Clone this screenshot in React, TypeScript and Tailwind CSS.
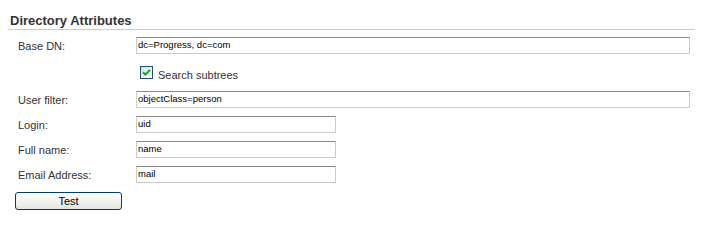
import { useState } from 'react'

const fieldFont = { fontFamily: '"Liberation Sans", Arial, sans-serif' }

function TextField({ value, wide }: { value: string; wide?: boolean }) {
  return (
    <input
      type="text"
      defaultValue={value}
      className={`${wide ? 'w-[554px]' : 'w-[200px]'} h-[17px] border border-[#cccccc] border-t-[#8a8a8a] bg-white pl-[1px] pb-[2px] text-[9.5px] leading-none text-black outline-none`}
      style={fieldFont}
    />
  )
}

function Row({ label, children }: { label: string; children: React.ReactNode }) {
  return (
    <div className="flex h-[17px] items-start">
      <div className="w-[118px] pt-[2px] text-[11px] leading-[15px] text-[#333333]">{label}</div>
      {children}
    </div>
  )
}

export default function App() {
  const [subtrees, setSubtrees] = useState(true)

  return (
    <div className="h-[218px] w-[703px] bg-white" style={fieldFont}>
      <div className="mx-[8px] border-b border-[#cccccc] pb-[1px] pl-[2px] pt-[13px]">
        <h2 className="text-[13px] font-bold leading-[15px] text-[#333333]">Directory Attributes</h2>
      </div>

      <div className="flex flex-col pl-[18px] pt-[7px]">
        <Row label="Base DN:">
          <TextField value="dc=Progress, dc=com" wide />
        </Row>

        {/* Checkbox sits under the input column */}
        <div className="mt-[12px] flex h-[18px] items-start pl-[122px]">
          <button
            type="button"
            onClick={() => setSubtrees(!subtrees)}
            className="flex h-[13px] w-[13px] items-center justify-center border border-[#1c5180] bg-gradient-to-br from-[#dcdcd7] to-white"
          >
            {subtrees && (
              <svg width="9" height="9" viewBox="0 0 9 9">
                <path d="M1 4.2 L3.4 6.6 L8 2" fill="none" stroke="#21a121" strokeWidth="2" />
              </svg>
            )}
          </button>
          <span className="ml-[5px] text-[11px] leading-[18px] text-[#333333]">Search subtrees</span>
        </div>

        <div className="mt-[7px] flex flex-col gap-[8px]">
          <Row label="User filter:">
            <TextField value="objectClass=person" wide />
          </Row>
          <Row label="Login:">
            <TextField value="uid" />
          </Row>
          <Row label="Full name:">
            <TextField value="name" />
          </Row>
          <Row label="Email Address:">
            <TextField value="mail" />
          </Row>
        </div>

        <div className="mt-[9px] -ml-[3px] flex">
          <button
            type="button"
            className="h-[18px] w-[107px] rounded-[3px] border border-[#003c74] bg-gradient-to-b from-white to-[#e6e6e0] text-[11px] leading-none text-black"
          >
            Test
          </button>
        </div>
      </div>
    </div>
  )
}
